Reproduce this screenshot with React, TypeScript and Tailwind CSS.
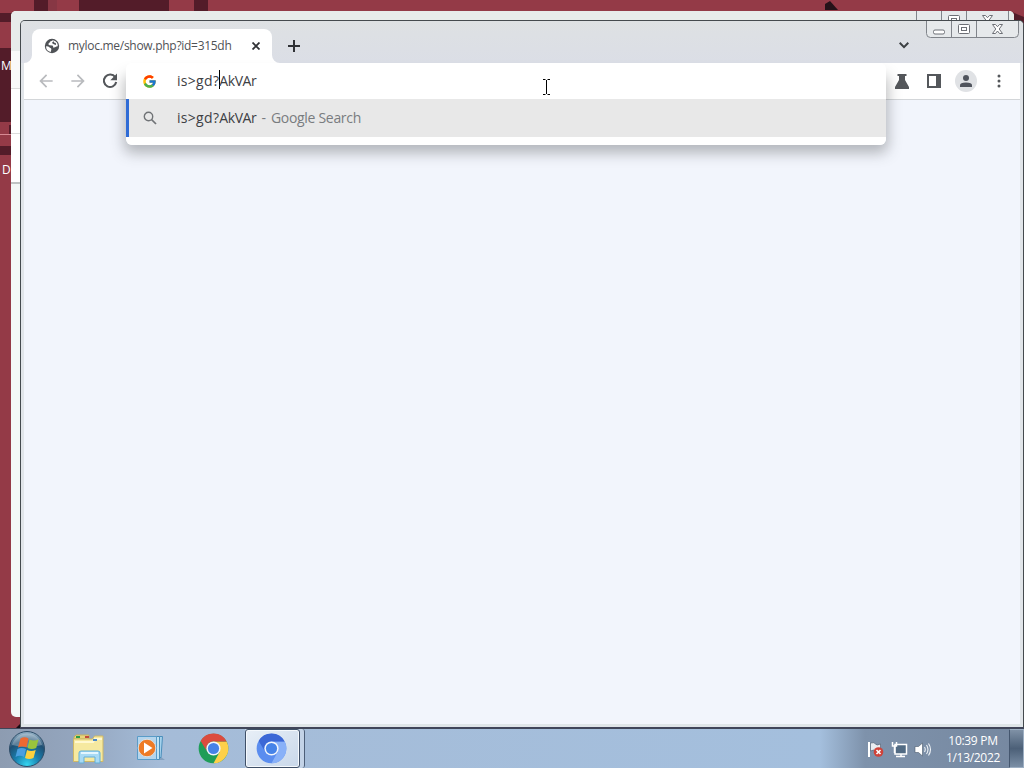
import { type ReactNode } from 'react';
import { FcGoogle } from 'react-icons/fc';
import { MdArrowBack, MdArrowForward } from 'react-icons/md';

const Wallpaper = () => (
  <svg className="absolute inset-0" width="1024" height="728" aria-hidden="true">
    <rect width="1024" height="728" fill="#943a47" />
    <g fill="#531c29">
      <rect x="0" y="13" width="12" height="9" />
      <rect x="34" y="0" width="14" height="12" />
      <rect x="79" y="0" width="90" height="12" />
      <rect x="194" y="0" width="14" height="12" />
      <rect x="48" y="0" width="9" height="12" fill="#873744" />
      <rect x="0" y="48" width="12" height="74" />
      <rect x="0" y="146" width="12" height="9" />
      <rect x="9" y="125" width="2" height="10" />
      <path d="M825 4l5-3 8 9h-13z" fill="#251219" />
      <path d="M1012 12l12 5v20h-12z" />
      <path d="M16 728l4-4 5 4z" fill="#160d14" />
    </g>
    <path d="M0 134.500h11" stroke="#d78a94" />
  </svg>
);

const CaptionButtons = () => (
  <svg width="93" height="18" viewBox="0 0 93 18" fill="none" stroke="#6d7076" aria-hidden="true">
    <path d="M.5 0v13.500a4 4 0 0 0 4 4h84a4 4 0 0 0 4-4V0M25.500 0v17M50.500 0v17" fill="#e6e9eb" stroke="#80848a" />
    <rect x="7.500" y="10" width="11" height="4" rx="1.500" fill="#fff" />
    <rect x="32.500" y="4.500" width="11" height="9" rx="1" fill="#fff" />
    <rect x="35.500" y="7.500" width="5" height="3" />
    <path
      d="M66.500 4.500h3l2 2.200 2-2.200h3L73.200 9l3.300 4.500h-3l-2-2.500-2 2.500h-3L69.800 9z"
      fill="#fff"
    />
  </svg>
);

const BackWindow = () => (
  <div className="absolute left-[11px] top-[11px] h-[706px] w-[1003px] overflow-hidden rounded-[5px] bg-[#f3f8f7]">
    <div className="flex h-10 justify-end bg-[#e8ebea] pr-[5px]">
      <CaptionButtons />
    </div>
    <div className="h-[38px] border-b border-[#dcdcdc] bg-[#f9f9f9]" />
    <div className="h-[45px] border-b border-[#dcdcdc] bg-white" />
    <div className="h-[50px] border-b-2 border-[#bfc3c3] bg-white" />
  </div>
);

const GlobeIcon = () => (
  <svg width="16" height="16" viewBox="0 0 16 16">
    <circle cx="8" cy="8" r="7.200" fill="#505357" />
    <path d="M8.800 2.200q-1.200 1-2.600 1.300Q5.600 5.200 4.500 5.500q-.3 1.500 1 1.800l3 .2q1 .6.500 1.900 1.800.4 3-.7.900-.8 1.800-.4A6 6 0 0 0 8.800 2.200" fill="#fff" />
    <path d="M2 8.400q2.200-.2 3.600 1 1.600.8 1.800 1.700l-.6 2.800A6 6 0 0 1 2 8.400" fill="#fff" />
    <path d="M9.300 3.200q1 .3.700 1.300l1.600.5q.9 1 .2 2l-2-.7-1.900-1.400z" fill="#505357" />
  </svg>
);

const Tab = () => (
  <div className="relative flex h-[34px] w-[240px] items-center rounded-t-lg bg-white pl-3 pr-3">
    <GlobeIcon />
    <span className="ml-2 whitespace-nowrap text-[12px] leading-4 tracking-[-0.29px] text-[#4f5256]">
      myloc.me/show.php?id=315dh
    </span>
    <svg className="ml-auto" width="8" height="8" stroke="#303236" strokeWidth="1.800">
      <path d="M.5 .5l7 7m0-7l-7 7" />
    </svg>
    <svg className="absolute -left-2 bottom-0" width="8" height="8" fill="#fff">
      <path d="M8 0v8H0a8 8 0 0 0 8-8" />
    </svg>
    <svg className="absolute -right-2 bottom-0" width="8" height="8" fill="#fff">
      <path d="M0 0v8h8a8 8 0 0 1-8-8" />
    </svg>
  </div>
);

const TabStrip = () => (
  <div className="flex h-[42px] items-end bg-gradient-to-b from-[#dee1e3] to-[#dbdee6] pl-[11px]">
    <Tab />
    <svg className="mb-[11px] ml-[16px]" width="12" height="12" stroke="#303236" strokeWidth="2">
      <path d="M6 0v12M0 6h12" />
    </svg>
    <svg className="mb-[14px] ml-[599px]" width="10" height="7" fill="none" stroke="#3c4043" strokeWidth="2">
      <path d="M.7 .8L5 5.100 9.300 .8" />
    </svg>
  </div>
);

const Omnibox = () => (
  <div className="absolute left-[105px] top-[42px] z-10 flex h-[82px] w-[760px] flex-col overflow-hidden rounded-[6px] bg-white text-[14px]">
    <div className="flex h-9 items-center pl-4">
      <FcGoogle className="size-[15px]" />
      <span className="ml-5 flex items-center leading-5 text-[#3d4044]">
        <span className="tracking-[0.3px]">is&gt;gd?</span>
        <span className="-mr-px mb-[3px] h-[19px] w-px bg-black" />
        <span className="tracking-[-0.4px]">AkVAr</span>
      </span>
    </div>
    <div className="flex h-[38px] items-center border-l-[3px] border-[#2e6bd6] bg-[#e8e8e8] pl-[13px]">
      <svg width="16" height="16" viewBox="0 0 16 16" fill="none" stroke="#707376">
        <circle cx="6.500" cy="6.500" r="4.200" strokeWidth="1.400" />
        <path d="M9.500 9.500l4.500 4.500" strokeWidth="1.700" />
      </svg>
      <span className="ml-[19px] flex leading-5 text-[#3d4044]">
        <span className="tracking-[0.3px]">is&gt;gd?</span>
        <span className="tracking-[-0.4px]">AkVAr</span>
      </span>
      <span className="ml-[5px] leading-5 text-[#797c7f]">-</span>
      <span className="ml-[5px] whitespace-nowrap leading-5 tracking-[-0.3px] text-[#797c7f]">Google Search</span>
    </div>
  </div>
);

const Toolbar = () => (
  <div className="flex h-[37px] items-center border-b border-[#d3d6d9] bg-white pl-[12px] pr-[19px] text-[#54575b]">
    <MdArrowBack className="size-5 text-[#b9bbbe]" />
    <MdArrowForward className="ml-3 size-5 text-[#b9bbbe]" />
    <svg className="ml-[14px]" width="16" height="16" viewBox="0 0 16 16" fill="none">
      <path d="M13.200 4.200A6.200 6.200 0 1 0 14.200 9" stroke="currentColor" strokeWidth="2.100" />
      <path d="M15 .5v6.700H8.300z" fill="currentColor" />
    </svg>
    <div className="ml-auto flex items-center">
      <svg width="14" height="15" viewBox="0 0 14 15" fill="currentColor">
        <path d="M2.500 0h9v2H10v4l4 7v2H0v-2l4-7V2H2.500z" />
      </svg>
      <svg className="ml-[18px]" width="14" height="14" fill="none" stroke="currentColor">
        <path d="M1 1h12v12H1z" strokeWidth="2" />
        <path d="M11 1v12" strokeWidth="4" />
      </svg>
      <span className="ml-[14px] flex size-[22px] items-center justify-center rounded-full bg-[#e0e2e5]">
        <svg width="12" height="12" viewBox="0 0 12 12" fill="#50545d">
          <circle cx="6" cy="3" r="3" />
          <path d="M0 12v-1.800Q0 7.500 6 7.500t6 2.700V12z" />
        </svg>
      </span>
      <svg className="ml-5" width="4" height="14" fill="currentColor">
        <circle cx="2" cy="2" r="1.500" />
        <circle cx="2" cy="7" r="1.500" />
        <circle cx="2" cy="12" r="1.500" />
      </svg>
    </div>
  </div>
);

const BrowserWindow = () => (
  <div className="absolute left-5 top-5 h-[708px] w-[1004px] rounded-t-[5px] border border-[#454a4e] bg-[#e1e5e9] border-b-[#41445a]">
    <div className="flex h-full flex-col overflow-hidden rounded-t">
      <TabStrip />
      <div className="mx-[3px] flex flex-1 flex-col">
        <Toolbar />
        <div className="flex-1 bg-[#f2f5fc]" />
      </div>
      <div className="h-[3px] bg-[#dfe5e8]" />
    </div>
    <div className="absolute right-[4px] top-0 h-[17px] overflow-hidden">
      <div className="-mt-px">
        <CaptionButtons />
      </div>
    </div>
    {/* shadow only falls below the toolbar line */}
    <div className="absolute left-[105px] top-[50px] h-[74px] w-[760px] rounded-[6px] shadow-[0_6px_14px_2px_rgba(60,64,67,0.35)]" />
    <Omnibox />
    <svg className="absolute left-[521px] top-[58px] z-20" width="9" height="17" fill="none" stroke="#000">
      <path d="M1 .5h2.500M5.500 .5H8M1 15.500h2.500M5.500 15.500H8M4.500 1v14" />
    </svg>
  </div>
);

const ChromeLogo = ({ colors }: { colors: [string, string, string, string] }) => {
  const [top, right, left, center] = colors;
  return (
    <svg width="31" height="31" viewBox="0 0 48 48">
      <circle cx="24" cy="24" r="23" fill={left} />
      <path d="M24 24V13h20.300A23 23 0 0 1 24 47l9.500-17.500z" fill={right} />
      <path d="M4.100 12.500A23 23 0 0 1 44.300 13H24a11 11 0 0 0-9.500 16.500z" fill={top} />
      <circle cx="24" cy="24" r="11" fill="#f3f6fc" />
      <circle cx="24" cy="24" r="8.700" fill={center} />
    </svg>
  );
};

const StartOrb = () => (
  <svg width="38" height="38" viewBox="0 0 38 38">
    <defs>
      <radialGradient id="orb" cx=".5" cy=".95" r=".9">
        <stop offset="0" stopColor="#35d5f0" />
        <stop offset=".4" stopColor="#197fae" />
        <stop offset=".75" stopColor="#1f4f73" />
        <stop offset="1" stopColor="#8aa9bf" />
      </radialGradient>
    </defs>
    <circle cx="19" cy="19" r="17.500" fill="url(#orb)" stroke="#2e4d68" />
    <path d="M4 15a15.500 15.500 0 0 1 30 0q-14 4-30 0" fill="#fff" opacity=".28" />
    <path d="M12.500 8.500q4-2.500 8 0l-2 9q-4.500-2-8.500 0z" fill="#ec6932" />
    <path d="M21.500 9.500q4.500 2 9 0l-2.300 8.500q-4.500 2-8.700 0z" fill="#9ac43c" />
    <path d="M9.500 19q4-2 8.500 0l-2 8q-4-2.500-8.500 0z" fill="#4a9fe0" />
    <path d="M19 20q4 2 8.700 0l-2.200 8q-4.500 2.200-8.500 0z" fill="#fbd13f" />
  </svg>
);

const ExplorerIcon = () => (
  <svg width="34" height="30" viewBox="0 0 34 30">
    <path d="M2 3l2-2h13v4H2z" fill="#e8d57c" stroke="#c4b161" />
    <path d="M4 2h4v2H4z" fill="#2b9d48" />
    <path d="M13 2h4v2h-4z" fill="#c44a3d" />
    <path d="M1.500 5h19l2-3h8.500v25.500H1.500z" fill="#f6e9a0" stroke="#cfb866" />
    <path d="M3 8h18l2-3h7" fill="none" stroke="#fff8d0" strokeWidth="2" />
    <path d="M21 5h4v2h-4z" fill="#4d89c9" />
    <path d="M7 29V19q0-2 2-2h17q2 0 2 2v10h-5v-6H12v6z" fill="#a8daf4" stroke="#62afd8" />
    <path d="M9 19h17" stroke="#e3f6ff" strokeWidth="2" />
  </svg>
);

const MediaPlayerIcon = () => (
  <svg width="30" height="27" viewBox="0 0 30 27">
    <path d="M19 25h10l-4-3z" fill="#6e8fb0" opacity=".6" />
    <path d="M10 1.500h16.500l-1.500 21-15 2z" fill="#a5d2ec" stroke="#4b8fbb" />
    <path d="M6 1.500h17.500v23H6z" fill="#c0e3f5" stroke="#4b8fbb" />
    <path d="M1.500 1.500h19v23h-19z" fill="#b4d5ed" stroke="#5a9cc8" />
    <circle cx="11" cy="13" r="8.800" fill="#ee7b26" stroke="#d9dfe3" />
    <path d="M8 7.500v11l8.500-5.500z" fill="#fff" />
  </svg>
);

const TaskSlot = ({ children }: { children: ReactNode }) => (
  <div className="flex h-full w-[62px] items-center justify-center">{children}</div>
);

const TrayIcons = () => (
  <svg width="66" height="20" viewBox="0 0 66 20" fill="none">
    <path d="M3 3v15" stroke="#fff" strokeWidth="2" />
    <path d="M4.500 4q4-1 5 1t5 0v8q-4 1-5-1t-5 0z" fill="#e9edf2" stroke="#4c5a6c" strokeWidth=".6" />
    <circle cx="12.500" cy="13" r="4.800" fill="#cf4239" />
    <path d="M10.500 11l4 4m0-4l-4 4" stroke="#fff" strokeWidth="1.600" />
    <rect x="29" y="5.500" width="11.500" height="9.500" fill="#526b84" stroke="#fff" strokeWidth="1.500" />
    <path d="M30 17.500h9M35 15v3" stroke="#fff" strokeWidth="1.500" />
    <path d="M26.500 3v4h4V3M28.500 7v7" stroke="#fff" strokeWidth="1.500" />
    <path d="M49 7.500h3.500L56.500 4v13l-4-3.500H49z" fill="#fff" stroke="#4c5a6c" strokeWidth=".6" />
    <path d="M58.500 8q1.500 2.500 0 5M60.500 6q3 4.500 0 9M62.500 4.500q4 6 0 12" stroke="#eef2f6" strokeWidth="1.100" />
  </svg>
);

const Taskbar = () => (
  <div className="absolute inset-x-0 bottom-0 flex h-10 items-stretch border-t border-[#3f4659] bg-linear-[to_right,#8d9cb1_0px,#94a6bf_80px,#a5bcd8_160px,#a4bfdd_820px,#7e92ab_865px,#7688a0_1024px]">
    <div className="flex w-[58px] items-center pl-2">
      <StartOrb />
    </div>
    <TaskSlot>
      <ExplorerIcon />
    </TaskSlot>
    <TaskSlot>
      <MediaPlayerIcon />
    </TaskSlot>
    <TaskSlot>
      <ChromeLogo colors={['#dc4b3e', '#fdd04a', '#1f9d58', '#4683e8']} />
    </TaskSlot>
    <div className="ml-px flex w-[60px] rounded-r-[3px] border-r border-[#4d5f78] bg-[#c3d3e7]">
      <div className="flex w-[55px] items-center justify-center rounded-[3px] border border-[#3f5068] bg-gradient-to-br from-[#e8eff7] to-[#c9d8ea] pr-[2px] shadow-[inset_0_0_0_1px_#f5f9fd]">
        <ChromeLogo colors={['#3b67d6', '#89b1f8', '#5b8def', '#4683e8']} />
      </div>
    </div>
    <div className="ml-auto flex items-center">
      <TrayIcons />
      <div className="ml-[7px] w-[68px] whitespace-nowrap text-center text-[12px] leading-[17px] tracking-[-0.3px] text-white">
        <div>10:39 PM</div>
        <div>1/13/2022</div>
      </div>
      <div className="ml-[2px] h-full w-[15px] border border-[#9dafc3] border-l-[#44566e] bg-gradient-to-b from-[#7f91a6] via-[#4c6078] to-[#7b8fa6]" />
    </div>
  </div>
);

export default function App() {
  return (
    <div className="relative h-[768px] w-[1024px] overflow-hidden bg-[#943a47] font-['Open_Sans','Noto_Sans',sans-serif]">
      <Wallpaper />
      <span className="absolute left-[1px] top-[58px] text-[12px] leading-4 text-white">M</span>
      <span className="absolute left-[2px] top-[162px] text-[12px] leading-4 text-white">D</span>
      <BackWindow />
      <BrowserWindow />
      <Taskbar />
    </div>
  );
}
